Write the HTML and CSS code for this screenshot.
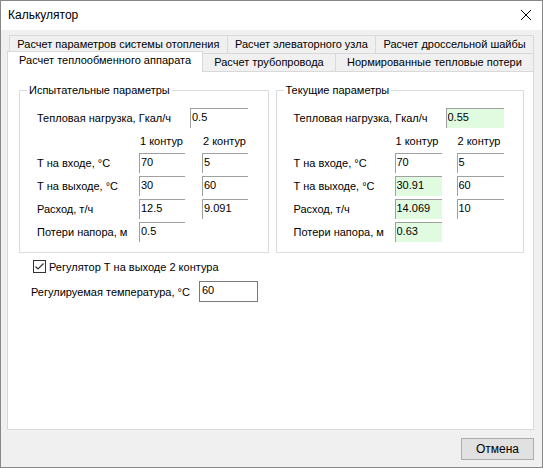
FILE: index.html
```html
<!DOCTYPE html>
<html lang="ru">

<head>
  <meta charset="UTF-8">
  <meta name="viewport" content="width=device-width, initial-scale=1.0">
  <title>Калькулятор</title>
  <link rel="stylesheet" href="styles.css">
</head>

<body>
  <div class="window">

    <div class="titlebar">
      <span class="title">Калькулятор</span>
      <svg class="close" width="12" height="12" viewBox="0 0 12 12">
        <path d="M1 1L11 11M11 1L1 11" stroke="#000" stroke-width="1" fill="none" />
      </svg>
    </div>

    <div class="client">

      <div class="tabs">
        <div class="tab-row tab-row-back">
          <div class="tab">Расчет параметров системы отопления</div>
          <div class="tab">Расчет элеваторного узла</div>
          <div class="tab">Расчет дроссельной шайбы</div>
        </div>
        <div class="tab-row tab-row-front">
          <div class="tab tab-active">Расчет теплообменного аппарата</div>
          <div class="tab">Расчет трубопровода</div>
          <div class="tab">Нормированные тепловые потери</div>
        </div>
      </div>

      <div class="panel">
        <div class="groups">

          <fieldset class="group group-test">
            <legend>Испытательные параметры</legend>
            <div class="row row-load">
              <span class="label">Тепловая нагрузка, Гкал/ч</span>
              <input class="field field-wide" value="0.5">
            </div>
            <div class="row row-head">
              <span class="label"></span>
              <span class="col">1 контур</span>
              <span class="col">2 контур</span>
            </div>
            <div class="row">
              <span class="label">Т на входе, °С</span>
              <input class="field" value="70">
              <input class="field" value="5">
            </div>
            <div class="row">
              <span class="label">Т на выходе, °С</span>
              <input class="field" value="30">
              <input class="field" value="60">
            </div>
            <div class="row">
              <span class="label">Расход, т/ч</span>
              <input class="field" value="12.5">
              <input class="field" value="9.091">
            </div>
            <div class="row">
              <span class="label">Потери напора, м</span>
              <input class="field" value="0.5">
            </div>
          </fieldset>

          <fieldset class="group group-current">
            <legend>Текущие параметры</legend>
            <div class="row row-load">
              <span class="label">Тепловая нагрузка, Гкал/ч</span>
              <input class="field field-wide calc" value="0.55">
            </div>
            <div class="row row-head">
              <span class="label"></span>
              <span class="col">1 контур</span>
              <span class="col">2 контур</span>
            </div>
            <div class="row">
              <span class="label">Т на входе, °С</span>
              <input class="field" value="70">
              <input class="field" value="5">
            </div>
            <div class="row">
              <span class="label">Т на выходе, °С</span>
              <input class="field calc" value="30.91">
              <input class="field" value="60">
            </div>
            <div class="row">
              <span class="label">Расход, т/ч</span>
              <input class="field calc" value="14.069">
              <input class="field" value="10">
            </div>
            <div class="row">
              <span class="label">Потери напора, м</span>
              <input class="field calc" value="0.63">
            </div>
          </fieldset>

        </div>

        <label class="check-row">
          <span class="checkbox">
            <svg width="13" height="13" viewBox="0 0 13 13">
              <rect x="0.5" y="0.5" width="12" height="12" fill="#fff" stroke="#333" />
              <path d="M2.5 6.5L5 9L10.5 3.5" stroke="#333" stroke-width="1.2" fill="none" />
            </svg>
          </span>
          Регулятор Т на выходе 2 контура
        </label>

        <div class="temp-row">
          <span class="temp-label">Регулируемая температура, °С</span>
          <input class="temp-field" value="60">
        </div>
      </div>

      <div class="buttons">
        <button class="btn">Отмена</button>
      </div>

    </div>
  </div>
</body>

</html>
```

FILE: styles.css
```css
* {
  margin: 0;
  padding: 0;
  box-sizing: border-box;
}

body {
  font-family: "Liberation Sans", Arial, sans-serif;
  font-size: 11px;
  color: #000;
  background: #fff;
}

.window {
  width: 543px;
  height: 468px;
  border: 1px solid #888;
  display: flex;
  flex-direction: column;
}

.titlebar {
  height: 29px;
  background: #fff;
  display: flex;
  align-items: center;
  justify-content: space-between;
  padding: 0 10px 2px 7px;
}

.title {
  font-size: 12px;
}

.client {
  flex: 1;
  background: #f0f0f0;
  display: flex;
  flex-direction: column;
  padding: 5px 8px 7px 6px;
}

/* tabs ######################################## */

.tab-row {
  display: flex;
  height: 18px;
  margin-left: 2px;
  margin-right: 1px;
}

.tab {
  flex: 1 1 auto;
  border: 1px solid #d9d9d9;
  border-bottom: none;
  margin-right: -1px;
  background: #f0f0f0;
  text-align: center;
  white-space: nowrap;
  line-height: 17px;
  padding: 0 4px;
}

.tab-active {
  position: relative;
  z-index: 1;
  height: 21px;
  margin: -2px -1px -1px -2px;
  background: #fff;
  line-height: 17px;
}

.panel {
  flex: 1;
  background: #fff;
  border: 1px solid #d9d9d9;
  padding: 0 9px 0 11px;
}

/* groups ####################################### */

.groups {
  display: flex;
  gap: 7px;
  margin-top: 12px;
}

.group {
  border: 1px solid #dcdcdc;
  padding: 12px 0 7px 17px;
}

.group legend {
  margin-left: -10px;
  padding: 0 2px;
}

.group-test {
  width: 250px;
  --lw-load: 153px;
  --lw: 102px;
  --fw: 46px;
  --gap: 17px;
}

.group-current {
  width: 249px;
  --lw-load: 152px;
  --lw: 101px;
  --fw: 47px;
  --gap: 15px;
}

.row {
  display: flex;
  align-items: center;
  gap: 0 var(--gap);
  height: 20px;
  margin-bottom: 3px;
}

.row .label {
  width: var(--lw);
  margin-right: calc(0px - var(--gap));
  white-space: nowrap;
}

.row-load .label {
  width: var(--lw-load);
}

.row-load {
  margin-bottom: 0;
}

.row-head {
  height: 25px;
  margin-bottom: 0;
}

.row-head .col {
  width: var(--fw);
  padding-left: 1px;
}

.field {
  width: var(--fw);
  height: 20px;
  border: none;
  border-top: 1px solid #a0a0a0;
  border-left: 1px solid #a0a0a0;
  background: #fff;
  font: inherit;
  padding: 0 0 4px 1px;
  outline: none;
}

.field-wide {
  width: 58px;
}

.calc {
  background: #e0fbe0;
}

/* bottom ####################################### */

.check-row {
  display: flex;
  align-items: center;
  gap: 3px;
  margin: 7px 0 0 14px;
  height: 13px;
}

.checkbox {
  display: flex;
}

.temp-row {
  display: flex;
  align-items: center;
  margin: 8px 0 0 12px;
  height: 21px;
}

.temp-label {
  width: 168px;
}

.temp-field {
  width: 59px;
  height: 21px;
  border: 1px solid #7a7a7a;
  font: inherit;
  padding: 0 0 3px 2px;
  outline: none;
}

.buttons {
  display: flex;
  justify-content: flex-end;
  margin-top: 8px;
}

.btn {
  width: 73px;
  height: 22px;
  background: #e1e1e1;
  border: 1px solid #adadad;
  font-family: "Liberation Sans", Arial, sans-serif;
  font-size: 12px;
  color: #000;
}
```
